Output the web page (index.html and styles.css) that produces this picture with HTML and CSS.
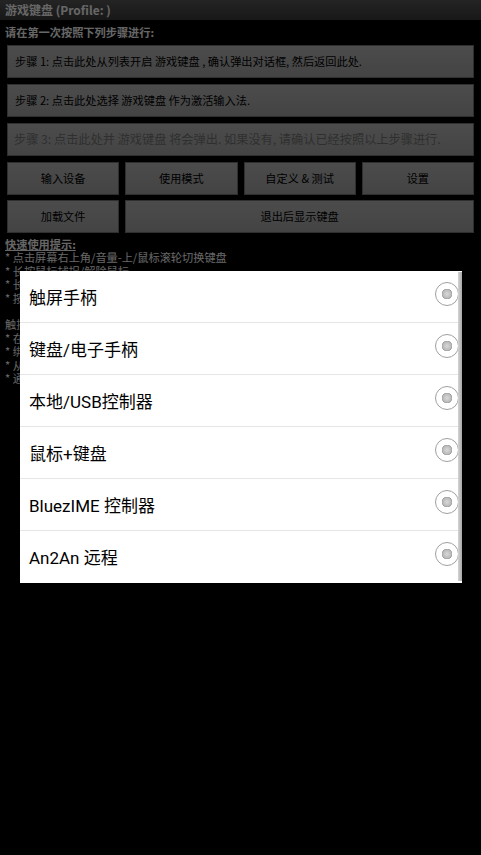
FILE: index.html
```html
<!DOCTYPE html>
<html lang="zh-CN">

<head>
    <meta charset="UTF-8">
    <meta name="viewport" content="width=device-width, initial-scale=1.0">
    <title>游戏键盘</title>
    <link rel="stylesheet" href="styles.css">
</head>

<body>
    <header class="title-bar">游戏键盘 (Profile: )</header>

    <main class="content">
        <p class="intro">请在第一次按照下列步骤进行:</p>

        <div class="step">步骤 1: 点击此处从列表开启 游戏键盘 , 确认弹出对话框, 然后返回此处.</div>
        <div class="step">步骤 2: 点击此处选择 游戏键盘 作为激活输入法.</div>
        <div class="step step-disabled">步骤 3: 点击此处并 游戏键盘 将会弹出. 如果没有, 请确认已经按照以上步骤进行.</div>

        <div class="button-grid">
            <div class="btn">输入设备</div>
            <div class="btn">使用模式</div>
            <div class="btn">自定义 &amp; 测试</div>
            <div class="btn">设置</div>
            <div class="btn">加载文件</div>
            <div class="btn btn-wide">退出后显示键盘</div>
        </div>

        <div class="tips">
            <p class="tips-title">快速使用提示:</p>
            <p>* 点击屏幕右上角/音量-上/鼠标滚轮切换键盘</p>
            <p>* 长按鼠标捕捉/解除鼠标</p>
            <p>* 长按音量-下打开菜单</p>
            <p>* 按返回键隐藏键盘</p>
            <p>&nbsp;</p>
            <p>触摸屏手柄使用提示:</p>
            <p>* 在屏幕上拖动摇杆移动</p>
            <p>* 绑定按键请进入自定义</p>
            <p>* 从列表中选择布局</p>
            <p>* 通过设置调整透明度</p>
        </div>
    </main>

    <!-- input device chooser -->
    <div class="dim"></div>
    <div class="dialog">
        <div class="dialog-list">
            <div class="option"><span>触屏手柄</span><span class="radio"></span></div>
            <div class="option"><span>键盘/电子手柄</span><span class="radio"></span></div>
            <div class="option"><span>本地/USB控制器</span><span class="radio"></span></div>
            <div class="option"><span>鼠标+键盘</span><span class="radio"></span></div>
            <div class="option"><span>BluezIME 控制器</span><span class="radio"></span></div>
            <div class="option"><span>An2An 远程</span><span class="radio"></span></div>
        </div>
        <div class="scrollbar"></div>
    </div>
</body>

</html>
```

FILE: styles.css
```css
body {
    margin: 0;
    background-color: #000;
    font-family: "Noto Sans CJK SC", "Noto Sans", sans-serif;
    color: #fff;
    width: 481px;
    height: 855px;
    overflow: hidden;
    position: relative;
}

p {
    margin: 0;
}

.title-bar {
    height: 20px;
    line-height: 20px;
    padding-left: 5px;
    font-size: 12px;
    font-weight: bold;
    color: #fff;
    background: linear-gradient(#5a5a5a, #3c3c3c);
}

.content {
    padding: 4px 7px 0 7px;
}

.intro {
    font-size: 11.2px;
    font-weight: bold;
    line-height: 16px;
    margin-left: -2px;
    margin-bottom: 5px;
}

.step {
    height: 31px;
    line-height: 31px;
    margin-bottom: 6px;
    padding-left: 7px;
    font-size: 11.2px;
    color: #000;
    background: linear-gradient(#bdbdbd, #a9a9a9);
    border: 1px solid #777;
}

.step-disabled {
    font-size: 12.2px;
    color: #777;
    padding-left: 6px;
}

.button-grid {
    display: grid;
    grid-template-columns: repeat(4, 1fr);
    gap: 5px 6px;
}

.btn {
    height: 31px;
    line-height: 31px;
    text-align: center;
    font-size: 11.2px;
    color: #000;
    background: linear-gradient(#bdbdbd, #a9a9a9);
    border: 1px solid #777;
}

.btn-wide {
    grid-column: span 3;
}

.tips {
    margin-top: 5px;
    margin-left: -2px;
    font-size: 11.2px;
    line-height: 13.4px;
    color: #fff;
}

.tips-title {
    font-weight: bold;
    text-decoration: underline;
}

/* dark layer behind the dialog */
.dim {
    position: absolute;
    inset: 0;
    background-color: rgba(0, 0, 0, 0.6);
}

.dialog {
    position: absolute;
    left: 20px;
    top: 271px;
    width: 442px;
    height: 312px;
    background-color: #fff;
    box-shadow: 0 0 2px rgba(0, 0, 0, 0.8);
    overflow: hidden;
}

.option {
    height: 51px;
    display: flex;
    align-items: center;
    justify-content: space-between;
    padding: 0 3px 0 9px;
    border-bottom: 1px solid #e6e6e6;
    font-family: Roboto, "Noto Sans CJK SC", sans-serif;
    font-size: 17px;
    color: #000;
}

.option:last-child {
    border-bottom: none;
}

.option span:first-child {
    margin-top: -1px;
}

.radio {
    width: 24px;
    height: 24px;
    margin-top: -5px;
    border-radius: 50%;
    border: 1px solid #a0a0a0;
    box-sizing: border-box;
    background: radial-gradient(circle, #d8d8d8 0, #bcbcbc 4px, #9e9e9e 5px, #fff 5.5px);
}

.scrollbar {
    position: absolute;
    right: 0;
    top: 1px;
    bottom: 2px;
    width: 4px;
    background: linear-gradient(to right, #d4d4d4, #a8a8a8);
}
```
